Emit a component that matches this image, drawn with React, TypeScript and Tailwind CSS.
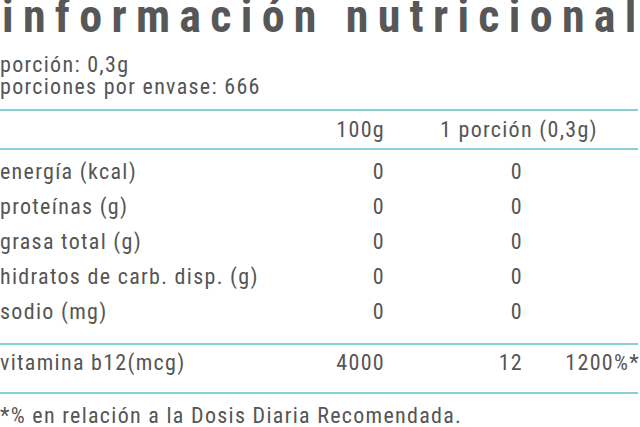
const rows: [string, string, string][] = [
  ["energía (kcal)", "0", "0"],
  ["proteínas (g)", "0", "0"],
  ["grasa total (g)", "0", "0"],
  ["hidratos de carb. disp. (g)", "0", "0"],
  ["sodio (mg)", "0", "0"],
];

function Rule() {
  return <div className="h-[2px] w-[638px] bg-[#86d0d6]" />;
}

export default function App() {
  return (
    <div className="w-[640px] h-[427px] overflow-hidden bg-white text-[#555555] font-['Roboto_Condensed',sans-serif] font-normal text-[22px] tracking-[1.3px]">
      <div className="-mt-[7px] pl-[2px] h-[46px] leading-[46px] text-[46px] font-bold tracking-[9.3px] whitespace-nowrap text-[#575757]">
        información nutricional
      </div>
      <div className="mt-[15px] leading-[22px]">
        <div>porción: 0,3g</div>
        <div>porciones por envase: 666</div>
      </div>
      <div className="mt-[11px]">
        <Rule />
      </div>
      <div className="flex h-[37px] leading-[37px] whitespace-nowrap">
        <div className="w-[285px]" />
        <div className="w-[100px] text-right">100g</div>
        <div className="pl-[55px]">1 porción (0,3g)</div>
      </div>
      <Rule />
      <div className="pt-[4px] pb-[14px]">
        {rows.map(([label, a, b]) => (
          <div key={label} className="flex h-[35px] leading-[35px] whitespace-nowrap">
            <div className="w-[285px]">{label}</div>
            <div className="w-[100px] text-right">{a}</div>
            <div className="w-[138px] text-right">{b}</div>
          </div>
        ))}
      </div>
      <Rule />
      <div className="flex h-[35px] leading-[35px] whitespace-nowrap mb-[12px]">
        <div className="w-[285px]">vitamina b12(mcg)</div>
        <div className="w-[100px] text-right">4000</div>
        <div className="w-[138px] text-right">12</div>
        <div className="w-[117px] text-right">1200%*</div>
      </div>
      <Rule />
      <div className="pt-[4px] h-[35px] leading-[35px] whitespace-nowrap">
        *% en relación a la Dosis Diaria Recomendada.
      </div>
    </div>
  );
}
